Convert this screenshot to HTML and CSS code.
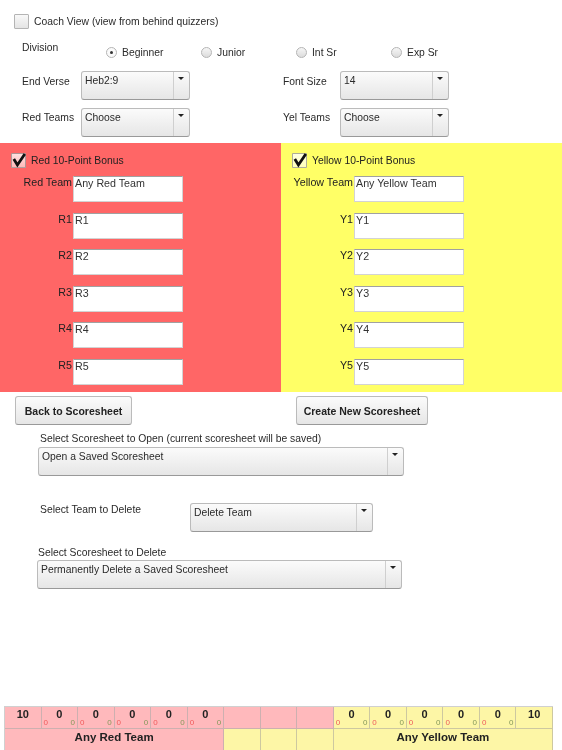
FILE: index.html
```html
<!DOCTYPE html>
<html lang="en">
<head>
    <meta charset="UTF-8">
    <meta name="viewport" content="width=device-width, initial-scale=1.0">
    <title>Scoresheet Setup</title>
    <link rel="stylesheet" href="styles.css">
</head>
<body>
    <div class="page">
        <!-- Options -->
        <div class="options">
            <div class="coach-row">
                <span class="check"></span>
                <span>Coach View (view from behind quizzers)</span>
            </div>
            <div class="division-row">
                <span class="division-label">Division</span>
                <span class="radio-item"><span class="radio selected"></span>Beginner</span>
                <span class="radio-item"><span class="radio"></span>Junior</span>
                <span class="radio-item"><span class="radio"></span>Int Sr</span>
                <span class="radio-item"><span class="radio"></span>Exp Sr</span>
            </div>
            <div class="field-row">
                <span class="field-label">End Verse</span>
                <div class="select w-small"><span class="select-text">Heb2:9</span><span class="select-arrow"></span></div>
                <span class="field-label second">Font Size</span>
                <div class="select w-small"><span class="select-text">14</span><span class="select-arrow"></span></div>
            </div>
            <div class="field-row teams">
                <span class="field-label">Red Teams</span>
                <div class="select w-small"><span class="select-text">Choose</span><span class="select-arrow"></span></div>
                <span class="field-label second">Yel Teams</span>
                <div class="select w-small"><span class="select-text">Choose</span><span class="select-arrow"></span></div>
            </div>
        </div>

        <!-- Team panels -->
        <div class="panels">
            <div class="panel red">
                <div class="bonus-row">
                    <span class="check"><svg viewBox="0 0 15 15"><path d="M2.8 6 L6.4 12 L13.8 1" /></svg></span>
                    <span>Red 10-Point Bonus</span>
                </div>
                <div class="team-row"><span class="team-label">Red Team</span><div class="team-input">Any Red Team</div></div>
                <div class="team-row"><span class="team-label">R1</span><div class="team-input">R1</div></div>
                <div class="team-row"><span class="team-label">R2</span><div class="team-input">R2</div></div>
                <div class="team-row"><span class="team-label">R3</span><div class="team-input">R3</div></div>
                <div class="team-row"><span class="team-label">R4</span><div class="team-input">R4</div></div>
                <div class="team-row"><span class="team-label">R5</span><div class="team-input">R5</div></div>
            </div>
            <div class="panel yellow">
                <div class="bonus-row">
                    <span class="check"><svg viewBox="0 0 15 15"><path d="M2.8 6 L6.4 12 L13.8 1" /></svg></span>
                    <span>Yellow 10-Point Bonus</span>
                </div>
                <div class="team-row"><span class="team-label">Yellow Team</span><div class="team-input">Any Yellow Team</div></div>
                <div class="team-row"><span class="team-label">Y1</span><div class="team-input">Y1</div></div>
                <div class="team-row"><span class="team-label">Y2</span><div class="team-input">Y2</div></div>
                <div class="team-row"><span class="team-label">Y3</span><div class="team-input">Y3</div></div>
                <div class="team-row"><span class="team-label">Y4</span><div class="team-input">Y4</div></div>
                <div class="team-row"><span class="team-label">Y5</span><div class="team-input">Y5</div></div>
            </div>
        </div>

        <!-- Scoresheet actions -->
        <div class="actions">
            <div class="action-buttons">
                <button class="btn back">Back to Scoresheet</button>
                <button class="btn create">Create New Scoresheet</button>
            </div>
            <p class="open-label">Select Scoresheet to Open (current scoresheet will be saved)</p>
            <div class="select w-open"><span class="select-text">Open a Saved Scoresheet</span><span class="select-arrow"></span></div>
            <div class="delete-team">
                <span class="delete-team-label">Select Team to Delete</span>
                <div class="select w-team"><span class="select-text">Delete Team</span><span class="select-arrow"></span></div>
            </div>
            <p class="delete-label">Select Scoresheet to Delete</p>
            <div class="select w-delete"><span class="select-text">Permanently Delete a Saved Scoresheet</span><span class="select-arrow"></span></div>
        </div>

        <!-- Scoreboard -->
        <div class="board">
            <div class="cell pink"><b>10</b></div>
            <div class="cell pink"><b>0</b><div class="minis"><i class="m-red">0</i><i class="m-green">0</i></div></div>
            <div class="cell pink"><b>0</b><div class="minis"><i class="m-red">0</i><i class="m-green">0</i></div></div>
            <div class="cell pink"><b>0</b><div class="minis"><i class="m-red">0</i><i class="m-green">0</i></div></div>
            <div class="cell pink"><b>0</b><div class="minis"><i class="m-red">0</i><i class="m-green">0</i></div></div>
            <div class="cell pink"><b>0</b><div class="minis"><i class="m-red">0</i><i class="m-green">0</i></div></div>
            <div class="cell pink"></div>
            <div class="cell pink"></div>
            <div class="cell pink"></div>
            <div class="cell lemon"><b>0</b><div class="minis"><i class="m-red">0</i><i class="m-green">0</i></div></div>
            <div class="cell lemon"><b>0</b><div class="minis"><i class="m-red">0</i><i class="m-green">0</i></div></div>
            <div class="cell lemon"><b>0</b><div class="minis"><i class="m-red">0</i><i class="m-green">0</i></div></div>
            <div class="cell lemon"><b>0</b><div class="minis"><i class="m-red">0</i><i class="m-green">0</i></div></div>
            <div class="cell lemon"><b>0</b><div class="minis"><i class="m-red">0</i><i class="m-green">0</i></div></div>
            <div class="cell lemon"><b>10</b></div>

            <div class="cell pink name">Any Red Team</div>
            <div class="cell lemon"></div>
            <div class="cell lemon"></div>
            <div class="cell lemon"></div>
            <div class="cell lemon name">Any Yellow Team</div>
        </div>
    </div>
</body>
</html>
```
FILE: styles.css
```css
/* General */
body {
    margin: 0;
    background: #fff;
    color: #2a2a2a;
    font-family: "Liberation Sans", Arial, sans-serif;
    font-size: 10.35px;
    line-height: 13px;
}
.page {
    width: 562px;
    height: 750px;
    overflow: hidden;
    filter: blur(0.35px);
}
p {
    margin: 0;
}

/* Shared controls */
.check {
    flex: none;
    box-sizing: border-box;
    width: 15px;
    height: 15px;
    border: 1px solid #b4b4b4;
    border-radius: 1px;
    background: linear-gradient(#f8f8f8, #e4e4e4);
}
.panel .check {
    border-color: rgba(120, 120, 120, 0.6);
    background: linear-gradient(rgba(255, 255, 255, 0.8), rgba(255, 255, 255, 0.55));
}
.check svg {
    display: block;
    width: 15px;
    height: 15px;
    margin: -1px 0 0 -1px;
    overflow: visible;
}
.check path {
    fill: none;
    stroke: #111;
    stroke-width: 2.8;
}
.radio {
    box-sizing: border-box;
    display: flex;
    align-items: center;
    justify-content: center;
    width: 11px;
    height: 11px;
    margin-right: 5px;
    border: 1px solid #b4b4b4;
    border-radius: 50%;
    background: linear-gradient(#f6f6f6, #dcdcdc);
}
.radio.selected {
    background: #fafafa;
}
.radio.selected::after {
    content: "";
    width: 3px;
    height: 3px;
    border-radius: 50%;
    background: #333;
}
.select {
    box-sizing: border-box;
    display: flex;
    justify-content: space-between;
    height: 29px;
    border: 1px solid #bbb;
    border-bottom-color: #999;
    border-radius: 3px;
    background: linear-gradient(#fbfbfb, #e6e6e6);
}
.select-text {
    padding: 2px 0 0 3px;
}
.select-arrow {
    position: relative;
    box-sizing: border-box;
    width: 16px;
    border-left: 1px solid #cfcfcf;
}
.select-arrow::after {
    content: "";
    position: absolute;
    top: 5px;
    left: 4px;
    border-left: 3px solid transparent;
    border-right: 3px solid transparent;
    border-top: 3px solid #222;
}
.w-small { width: 109px; }
.w-open { width: 366px; margin-left: 38px; }
.w-team { width: 183px; }
.w-delete { width: 365px; margin-left: 37px; }

/* Options */
.options {
    height: 143px;
    overflow: hidden;
}
.coach-row {
    display: flex;
    align-items: center;
    gap: 5px;
    margin: 14px 0 0 14px;
}
.division-row {
    display: flex;
    align-items: flex-start;
    margin: 12px 0 0 22px;
}
.division-label {
    width: 84px;
}
.radio-item {
    display: flex;
    align-items: center;
    width: 95px;
    margin-top: 5px;
}
.field-row {
    display: flex;
    margin: 12px 0 0 22px;
}
.field-row.teams {
    margin-top: 8px;
}
.field-label {
    width: 59px;
    margin-top: 4px;
}
.field-label.second {
    width: 57px;
    margin-left: 93px;
}
.teams .field-label {
    margin-top: 3px;
}

/* Team panels */
.panels {
    display: grid;
    grid-template-columns: 281px 281px;
    grid-template-rows: 249px;
}
.panel {
    overflow: hidden;
    padding: 10px 0 0 11px;
    color: #222;
}
.panel.red { background: #ff6666; }
.panel.yellow { background: #ffff66; }
.bonus-row {
    display: flex;
    align-items: center;
    gap: 5px;
    height: 15px;
    margin-bottom: 8px;
}
.team-row {
    display: flex;
    gap: 1px;
    margin-bottom: 10.6px;
    margin-left: -11px;
    font-size: 10.7px;
}
.team-label {
    width: 72px;
    text-align: right;
    white-space: nowrap;
}
.team-input {
    box-sizing: border-box;
    width: 110px;
    height: 26px;
    padding: 0 0 0 1px;
    border: 1px solid rgba(130, 130, 130, 0.35);
    border-top-color: rgba(100, 100, 100, 0.6);
    background: #fff;
    color: #333;
}

/* Scoresheet actions */
.actions {
    height: 314px;
    overflow: hidden;
}
.action-buttons {
    display: grid;
    grid-template-columns: 281px 1fr;
    margin: 4px 0 0 15px;
}
.btn {
    box-sizing: border-box;
    height: 29px;
    padding: 0;
    border: 1px solid #bbb;
    border-bottom-color: #999;
    border-radius: 3px;
    background: linear-gradient(#fbfbfb, #e6e6e6);
    color: #222;
    font-family: inherit;
    font-size: 10.5px;
    font-weight: bold;
}
.btn.back { width: 117px; }
.btn.create { width: 132px; }
.open-label {
    margin: 7px 0 2px 40px;
}
.delete-team {
    display: flex;
    margin: 27px 0 0 40px;
}
.delete-team-label {
    width: 150px;
}
.delete-label {
    margin: 14px 0 1px 38px;
}

/* Scoreboard */
.board {
    display: grid;
    grid-template-columns: repeat(15, 1fr);
    grid-template-rows: 22px 24px;
    width: 548px;
    margin-left: 4px;
    border-top: 1px solid #d0d0d0;
    border-left: 1px solid #d0d0d0;
    color: #222;
}
.cell {
    box-sizing: border-box;
    display: flex;
    flex-direction: column;
    align-items: center;
    border-right: 1px solid #cdb0b0;
    border-bottom: 1px solid #cdb0b0;
}
.cell.pink { background: #ffb9bc; }
.cell.lemon {
    background: #fdf6a6;
    border-color: #cdc8a0;
}
.cell b {
    margin-top: 2px;
    font-size: 11px;
    line-height: 11px;
}
.cell.name {
    grid-column: span 6;
    padding-top: 1px;
    font-size: 11.5px;
    line-height: 15px;
    font-weight: bold;
}
.minis {
    display: flex;
    justify-content: space-between;
    width: 100%;
    margin-top: -2px;
    padding: 0 2px;
    box-sizing: border-box;
    font-size: 8px;
    line-height: 9px;
}
.minis i {
    font-style: normal;
}
.m-red { color: #f05a5a; }
.m-green { color: #84985a; }
```
